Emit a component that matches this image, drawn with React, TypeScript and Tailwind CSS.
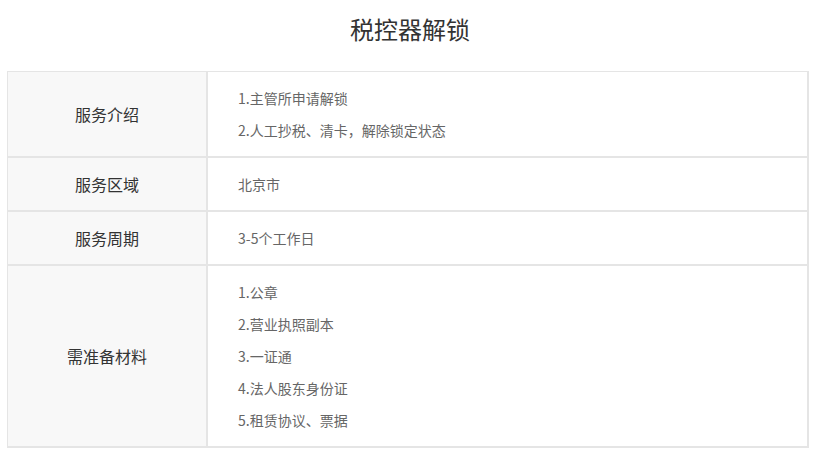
const rows: { label: string; items: string[] }[] = [
  { label: "服务介绍", items: ["1.主管所申请解锁", "2.人工抄税、清卡，解除锁定状态"] },
  { label: "服务区域", items: ["北京市"] },
  { label: "服务周期", items: ["3-5个工作日"] },
  {
    label: "需准备材料",
    items: ["1.公章", "2.营业执照副本", "3.一证通", "4.法人股东身份证", "5.租赁协议、票据"],
  },
];

export default function App() {
  return (
    <div
      className="w-[820px] h-[460px] bg-white"
      style={{ fontFamily: '"Microsoft YaHei", "Noto Sans CJK SC", sans-serif' }}
    >
      <h1 className="h-[61px] pt-[12px] text-center text-[24px] leading-[34px] text-[#333]">税控器解锁</h1>
      <div className="ml-[7px] mt-[10px] w-[802px] border-t border-l border-[#e5e5e5]">
        {rows.map((row) => (
          <div key={row.label} className="flex border-b-2 border-[#e5e5e5]">
            <div className="w-[200px] shrink-0 flex items-center justify-center bg-[#f8f8f8] border-r-2 border-[#e5e5e5] text-[16px] text-[#333]">
              {row.label}
            </div>
            <div className="flex-1 py-[10px] pl-[30px] border-r-2 border-[#e5e5e5] bg-white">
              {row.items.map((it) => (
                <p key={it} className="text-[14px] leading-[32px] text-[#666]">
                  {it}
                </p>
              ))}
            </div>
          </div>
        ))}
      </div>
    </div>
  );
}
